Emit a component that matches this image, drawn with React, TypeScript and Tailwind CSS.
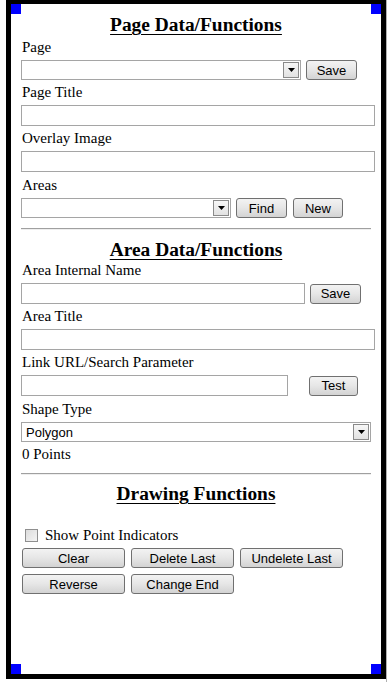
import React from "react";

const serif = "font-['Liberation_Serif','Times_New_Roman',serif]";
const sans = "font-['Liberation_Sans',Arial,sans-serif]";

const Btn: React.FC<{ label: string; className?: string }> = ({ label, className = "" }) => (
  <button
    className={`h-[20px] rounded-[3px] border border-[#707070] bg-gradient-to-b from-[#f3f3f3] via-[#e6e6e6] to-[#d3d3d3] text-[13px] leading-none text-black ${sans} ${className}`}
  >
    {label}
  </button>
);

const Select: React.FC<{ value?: string; className?: string }> = ({ value = "", className = "" }) => (
  <div
    className={`flex h-[20px] items-center border border-[#a5a5a5] bg-white pl-[4px] pr-[1px] ${className}`}
  >
    <span className={`flex-1 text-[13px] leading-none text-black ${sans}`}>{value}</span>
    <div className="flex h-[16px] w-[16px] items-center justify-center border border-[#8a8a8a] bg-gradient-to-b from-[#f7f7f7] to-[#e2e2e2]">
      <svg width="7" height="4" viewBox="0 0 7 4">
        <path d="M0 0h7L3.5 4z" fill="#000" />
      </svg>
    </div>
  </div>
);

const Input: React.FC<{ className?: string }> = ({ className = "" }) => (
  <div className={`h-[21px] border border-[#a5a5a5] bg-white ${className}`} />
);

const Label: React.FC<{ text: string; className?: string }> = ({ text, className = "mt-[3px]" }) => (
  <div className={`mb-[4px] h-[18px] pl-[1px] text-[15px] leading-[19px] ${className}`}>{text}</div>
);

const Heading: React.FC<{ text: string }> = ({ text }) => (
  <h3 className="text-center text-[19.4px] leading-[20px] font-bold underline decoration-1 underline-offset-[3px]">
    {text}
  </h3>
);

const Corner: React.FC<{ className: string }> = ({ className }) => (
  <div className={`absolute h-[10px] w-[10px] bg-[#0000ff] ${className}`} />
);

const Rule = () => <div className="mt-[10px] h-[2px] w-[350px] border-t border-[#a0a0a0] bg-[#eeeeee]" />;

export default function App() {
  return (
    <div className={`flex h-[682px] w-[388px] bg-white text-black ${serif}`}>
      <div className="relative ml-[6px] h-[679px] w-[380px] border-x-[5px] border-t-4 border-b-[5px] border-black bg-white">
        <Corner className="left-0 top-0" />
        <Corner className="right-0 top-0" />
        <Corner className="left-0 bottom-0" />
        <Corner className="right-0 bottom-0" />

        <div className="flex flex-col px-[10px] pt-[11px]">
          <Heading text="Page Data/Functions" />
          <Label text="Page" />
          <div className="flex gap-[5px]">
            <Select className="w-[280px]" />
            <Btn label="Save" className="w-[51px]" />
          </div>
          <Label text="Page Title" />
          <Input className="w-[354px]" />
          <Label text="Overlay Image" />
          <Input className="w-[354px]" />
          <Label text="Areas" className="mt-[4px]" />
          <div className="flex">
            <Select className="w-[210px]" />
            <Btn label="Find" className="ml-[5px] w-[51px]" />
            <Btn label="New" className="ml-[6px] w-[50px]" />
          </div>
          <Rule />

          <div className="mt-[10px]">
            <Heading text="Area Data/Functions" />
          </div>
          <Label text="Area Internal Name" className="mt-[1px]" />
          <div className="flex items-center gap-[5px]">
            <Input className="w-[284px]" />
            <Btn label="Save" className="w-[51px]" />
          </div>
          <Label text="Area Title" />
          <Input className="w-[354px]" />
          <Label text="Link URL/Search Parameter" />
          <div className="flex items-center">
            <Input className="w-[267px]" />
            <Btn label="Test" className="ml-[21px] w-[49px]" />
          </div>
          <Label text="Shape Type" className="mt-[4px]" />
          <Select value="Polygon" className="h-[19px] w-[350px]" />
          <div className="mt-[3px] h-[18px] pl-[1px] text-[15px] leading-[19px]">0 Points</div>
          <Rule />

          <div className="mt-[9px]">
            <Heading text="Drawing Functions" />
          </div>
          <label className="mt-[23px] flex h-[16px] items-center text-[15px] leading-[18px]">
            <span className="ml-[4px] mr-[7px] h-[13px] w-[13px] border border-[#8f8f8f] bg-gradient-to-br from-[#dcdcdc] to-[#f4f4f4]" />
            Show Point Indicators
          </label>
          <div className="mt-[5px] flex gap-[6px] pl-[1px]">
            <Btn label="Clear" className="w-[103px]" />
            <Btn label="Delete Last" className="w-[103px]" />
            <Btn label="Undelete Last" className="w-[103px]" />
          </div>
          <div className="mt-[6px] flex gap-[6px] pl-[1px]">
            <Btn label="Reverse" className="w-[103px]" />
            <Btn label="Change End" className="w-[103px]" />
          </div>
        </div>
      </div>
      <div className="h-[682px] w-px bg-[#b0b0b0]" />
    </div>
  );
}
